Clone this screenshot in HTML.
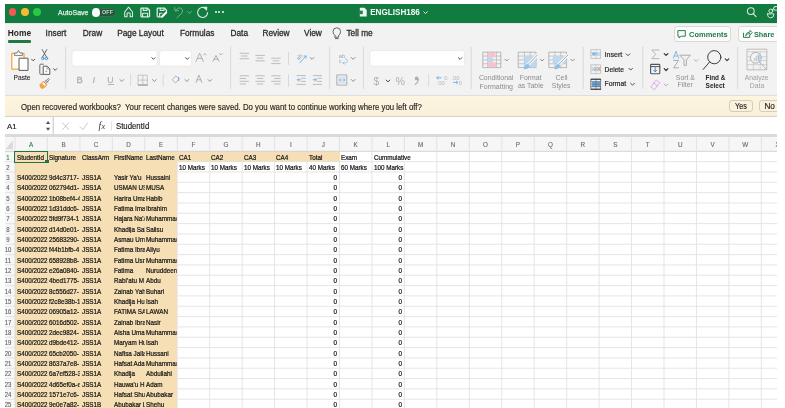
<!DOCTYPE html><html><head><meta charset="utf-8"><style>
*{box-sizing:border-box}
body{margin:0;width:785px;height:408px;background:#fff;position:relative;overflow:hidden;font-family:"Liberation Sans",sans-serif}
#app{position:absolute;left:0;top:0;width:777px;height:408px;clip-path:inset(4px 0 0 5px);background:#f2f2f2;overflow:hidden;will-change:transform}
.a{position:absolute;white-space:nowrap}
.t{position:absolute;white-space:nowrap;line-height:1}
.c{position:absolute;white-space:nowrap;line-height:1;font-size:7.6px;color:#141414;transform:scaleX(0.83);transform-origin:0 0;-webkit-text-stroke:0.24px #141414}
.cr{position:absolute;white-space:nowrap;line-height:1;font-size:7.6px;color:#141414;transform:scaleX(0.83);transform-origin:100% 0;text-align:right;-webkit-text-stroke:0.24px #141414}
</style></head><body><div id="app">

<div class="a" style="left:0;top:0;width:777px;height:23px;background:#127b40"></div>
<div class="a" style="left:8.70px;top:8.35px;width:7.8px;height:7.8px;border-radius:50%;background:#ee5b52"></div>
<div class="a" style="left:21.10px;top:8.35px;width:7.8px;height:7.8px;border-radius:50%;background:#f4bb2e"></div>
<div class="a" style="left:33.40px;top:8.35px;width:7.8px;height:7.8px;border-radius:50%;background:#2ac840"></div>
<div class="t" style="left:57.6px;top:9.2px;font-size:7.4px;color:#e3ede6;transform:scaleX(0.95);transform-origin:0 0;-webkit-text-stroke:0.25px #e3ede6">AutoSave</div>
<div class="a" style="left:92px;top:7.8px;width:23.8px;height:9.2px;border-radius:4.6px;background:#245a3a;border:0.5px solid #3c6e50"></div>
<div class="a" style="left:92.3px;top:8.1px;width:7.8px;height:8.6px;border-radius:50%;background:#fafafa"></div>
<div class="t" style="left:101.9px;top:10.4px;font-size:5.3px;font-weight:bold;color:#cfd8d2;letter-spacing:0.2px">OFF</div>
<svg class="a" style="left:0;top:0" width="777" height="23" viewBox="0 0 777 23" fill="none" stroke="#dcebe1" stroke-width="1.05" stroke-linejoin="round" stroke-linecap="round">
 <path d="M124.7 12 L128.6 7.2 L132.5 12 L132.5 16.8 L130.1 16.8 L130.1 13.2 Q128.6 12.2 127.1 13.2 L127.1 16.8 L124.7 16.8 Z"/>
 <path d="M141 8.2 h6.5 l2 2 v5.8 q0 0.8 -0.8 0.8 h-7 q-0.8 0 -0.8 -0.8 v-7 q0 -0.8 0.8 -0.8z" stroke-width="1.3"/>
 <path d="M143.2 8.2 v2.2 h3.8 v-2.2" stroke-width="1.1"/>
 <path d="M142.6 16.6 v-3.3 h4.9 v3.3" stroke-width="1.1"/>
 <path d="M158 8.2 h6.5 l2 2 v1.4 M160.6 16.8 h-2.6 q-0.8 0 -0.8 -0.8 v-7 q0 -0.8 0.8 -0.8" stroke-width="1.3"/>
 <path d="M160.2 8.2 v2.2 h3.8 v-2.2" stroke-width="1.1"/>
 <path d="M159.6 16.6 v-3.3 h2.5" stroke-width="1.1"/>
 <path d="M166.2 12.6 L162 16.8" stroke="#ffffff" stroke-width="2.1"/>
 <g stroke="#79b08c" stroke-width="0.95">
  <path d="M175.6 10.6 Q178.6 6.4 181.6 8.6 Q183.8 10.8 181.4 13.6 L176.8 17.8"/>
  <path d="M174.6 7.6 L175.2 11 L178.6 10.6"/>
  <path d="M187.8 11.5 L189.6 13.5 L191.4 11.5"/>
 </g>
 <path d="M205.8 8.6 A5 5 0 1 0 207.6 12.6" stroke-width="1.15"/>
 <path d="M203.9 7.2 L207 7 L206.6 10.2 Z" fill="#dcebe1" stroke-width="0.6"/>
 <path d="M359.8 7.8 h4.6 l2.3 2.3 v6.4 h-6.9 z" fill="#f4f8f5" stroke="none"/>
 <rect x="358.9" y="10.6" width="3.9" height="3.6" fill="#1f8a4c" stroke="none"/>
 <path d="M748.6 7.6" />
 <circle cx="750.8" cy="11.1" r="3.4" stroke-width="1.05"/>
 <path d="M753.3 13.6 L756 16.6" stroke-width="1.1"/>
 <path d="M423.7 11.7 L425.5 13.6 L427.3 11.7" stroke="#e8f1ea" stroke-width="0.95"/>
 <circle cx="770.8" cy="11" r="1.9" stroke-width="1"/>
 <path d="M767.6 13.9 h6.3 q0.2 3.9 -3.15 3.9 q-3.35 0 -3.15 -3.9 z" stroke-width="1"/>
 <rect x="773.6" y="6.6" width="5.4" height="3.6" rx="1.6" stroke-width="1"/>
 <path d="M772 9.6 L773.8 8.8" stroke-width="0.9"/>
</svg>
<div class="a" style="left:215px;top:11.4px;width:1.9px;height:1.9px;border-radius:50%;background:#f0f5f1"></div>
<div class="a" style="left:218.4px;top:11.4px;width:1.9px;height:1.9px;border-radius:50%;background:#f0f5f1"></div>
<div class="a" style="left:221.8px;top:11.4px;width:1.9px;height:1.9px;border-radius:50%;background:#f0f5f1"></div>
<div class="t" style="left:370.2px;top:9.3px;font-size:8.15px;font-weight:bold;color:#f6faf7">ENGLISH186</div>

<div class="a" style="left:0;top:23px;width:777px;height:1px;background:#e6e6e6"></div>
<div class="t" style="left:7.80px;top:29.19px;font-size:8.4px;font-weight:bold;color:#262626">Home</div>
<div class="t" style="left:45.60px;top:29.27px;font-size:8.3px;font-weight:normal;color:#2c2c2c;-webkit-text-stroke:0.28px #2c2c2c">Insert</div>
<div class="t" style="left:82.80px;top:29.27px;font-size:8.3px;font-weight:normal;color:#2c2c2c;-webkit-text-stroke:0.28px #2c2c2c">Draw</div>
<div class="t" style="left:117.20px;top:29.27px;font-size:8.3px;font-weight:normal;color:#2c2c2c;-webkit-text-stroke:0.28px #2c2c2c">Page Layout</div>
<div class="t" style="left:179.90px;top:29.27px;font-size:8.3px;font-weight:normal;color:#2c2c2c;-webkit-text-stroke:0.28px #2c2c2c">Formulas</div>
<div class="t" style="left:230.50px;top:29.27px;font-size:8.3px;font-weight:normal;color:#2c2c2c;-webkit-text-stroke:0.28px #2c2c2c">Data</div>
<div class="t" style="left:262.40px;top:29.27px;font-size:8.3px;font-weight:normal;color:#2c2c2c;-webkit-text-stroke:0.28px #2c2c2c">Review</div>
<div class="t" style="left:304.00px;top:29.27px;font-size:8.3px;font-weight:normal;color:#2c2c2c;-webkit-text-stroke:0.28px #2c2c2c">View</div>
<div class="t" style="left:346.40px;top:29.27px;font-size:8.3px;font-weight:normal;color:#2c2c2c;-webkit-text-stroke:0.28px #2c2c2c">Tell me</div>
<div class="a" style="left:7.8px;top:40.4px;width:23.4px;height:2.2px;border-radius:1.1px;background:#1e7a45"></div>
<div class="a" style="left:673.5px;top:26.4px;width:57.8px;height:16px;border:0.8px solid #d9d9d9;border-radius:3px;background:#fbfbfb"></div>
<div class="t" style="left:689.00px;top:30.85px;font-size:7.5px;font-weight:bold;color:#23774a">Comments</div>
<div class="a" style="left:738.3px;top:26.4px;width:60px;height:16px;border:0.8px solid #d9d9d9;border-radius:3px;background:#fbfbfb"></div>
<div class="t" style="left:754.00px;top:31.02px;font-size:7.3px;font-weight:bold;color:#23774a">Share</div>
<div class="t" style="left:13.60px;top:75.01px;font-size:6.6px;font-weight:normal;color:#262626;-webkit-text-stroke:0.1px #262626">Paste</div>
<div class="t" style="left:478.90px;top:74.66px;font-size:6.9px;font-weight:normal;color:#8c8c8c">Conditional</div>
<div class="t" style="left:479.50px;top:82.97px;font-size:7px;font-weight:normal;color:#8c8c8c">Formatting</div>
<div class="t" style="left:519.70px;top:74.66px;font-size:6.9px;font-weight:normal;color:#8c8c8c">Format</div>
<div class="t" style="left:518.00px;top:83.06px;font-size:6.9px;font-weight:normal;color:#8c8c8c">as Table</div>
<div class="t" style="left:555.60px;top:74.66px;font-size:6.9px;font-weight:normal;color:#8c8c8c">Cell</div>
<div class="t" style="left:551.80px;top:83.06px;font-size:6.9px;font-weight:normal;color:#8c8c8c">Styles</div>
<div class="t" style="left:604.60px;top:51.59px;font-size:7.1px;font-weight:normal;color:#2a2a2a;-webkit-text-stroke:0.2px #2a2a2a">Insert</div>
<div class="t" style="left:604.60px;top:66.53px;font-size:6.7px;font-weight:normal;color:#2a2a2a;-webkit-text-stroke:0.2px #2a2a2a">Delete</div>
<div class="t" style="left:604.60px;top:81.34px;font-size:6.8px;font-weight:normal;color:#2a2a2a;-webkit-text-stroke:0.2px #2a2a2a">Format</div>
<div class="t" style="left:675.80px;top:74.56px;font-size:6.9px;font-weight:normal;color:#8c8c8c">Sort &amp;</div>
<div class="t" style="left:677.50px;top:82.06px;font-size:6.9px;font-weight:normal;color:#8c8c8c">Filter</div>
<div class="t" style="left:705.60px;top:75.12px;font-size:6.35px;font-weight:bold;color:#262626">Find &amp;</div>
<div class="t" style="left:705.60px;top:82.90px;font-size:6.5px;font-weight:bold;color:#262626">Select</div>
<div class="t" style="left:744.80px;top:74.83px;font-size:6.7px;font-weight:normal;color:#a0a0a0">Analyze</div>
<div class="t" style="left:749.70px;top:82.56px;font-size:6.9px;font-weight:normal;color:#a0a0a0">Data</div>
<svg class="a" style="left:0;top:0" width="777" height="96" viewBox="0 0 777 96" fill="none" stroke-linecap="round" stroke-linejoin="round"><path d="M678.3 30.6 h7 v5.6 h-4.2 l-2 1.8 v-1.8 h-0.8 z" stroke="#23774a" stroke-width="0.95"/><path d="M743.5 33.2 v4.2 h6.2 v-2" stroke="#23774a" stroke-width="0.95"/><path d="M745.6 35.6 q0.6 -3.6 4.4 -3.6 v-1.6 l2.3 2.3 l-2.3 2.1 v-1.3 q-2.8 0 -4.4 2.1z" stroke="#23774a" stroke-width="0.85"/><path d="M335 35.6 q-2 -1.6 -2 -4 a3.8 3.8 0 0 1 7.6 0 q0 2.4 -2 4 v1.6 h-3.6 z M335.4 38.6 h2.8" stroke="#555" stroke-width="0.9"/><line x1="65.6" y1="47" x2="65.6" y2="88.5" stroke="#d6d6d6" stroke-width="0.9"/><line x1="230.6" y1="47" x2="230.6" y2="88.5" stroke="#d6d6d6" stroke-width="0.9"/><line x1="363.4" y1="47" x2="363.4" y2="88.5" stroke="#d6d6d6" stroke-width="0.9"/><line x1="471.2" y1="47" x2="471.2" y2="88.5" stroke="#d6d6d6" stroke-width="0.9"/><line x1="583.2" y1="47" x2="583.2" y2="88.5" stroke="#d6d6d6" stroke-width="0.9"/><line x1="642.8" y1="47" x2="642.8" y2="88.5" stroke="#d6d6d6" stroke-width="0.9"/><line x1="737.6" y1="47" x2="737.6" y2="88.5" stroke="#d6d6d6" stroke-width="0.9"/><line x1="329.6" y1="47" x2="329.6" y2="88.5" stroke="#d6d6d6" stroke-width="0.9"/><line x1="130.6" y1="73.8" x2="130.6" y2="85.8" stroke="#d6d6d6" stroke-width="0.9"/><line x1="163.2" y1="74.2" x2="163.2" y2="86" stroke="#d6d6d6" stroke-width="0.9"/><line x1="288.5" y1="52.3" x2="288.5" y2="64.6" stroke="#d6d6d6" stroke-width="0.9"/><line x1="288.5" y1="74.4" x2="288.5" y2="86.6" stroke="#d6d6d6" stroke-width="0.9"/><line x1="428.7" y1="74.3" x2="428.7" y2="86.2" stroke="#d6d6d6" stroke-width="0.9"/><path d="M11.8 53.4 h12.2 v15.6 h-12.2 z" fill="#fdfdfd" stroke="#f2a541" stroke-width="1.25"/><path d="M14.6 55.2 v-2.2 h2.4 l1.5 -2.6 l1.5 2.6 h2.4 v2.2 z" fill="#f6f6f6" stroke="#777" stroke-width="0.9"/><rect x="19.4" y="58.2" width="8.6" height="12.2" fill="#fdfdfd" stroke="#555" stroke-width="0.95"/><rect x="72" y="50.6" width="85.2" height="15.5" rx="2.2" fill="#fff" stroke="#e2e2e2" stroke-width="0.6"/><rect x="159.6" y="50.6" width="31.9" height="15.5" rx="2.2" fill="#fff" stroke="#e2e2e2" stroke-width="0.6"/><rect x="370" y="50.6" width="94.4" height="15.5" rx="2.2" fill="#fff" stroke="#e2e2e2" stroke-width="0.6"/><path d="M31.6 59.20 L33.20 60.80 L34.8 59.20" stroke="#444" stroke-width="0.95"/><path d="M53.6 68.70 L55.20 70.30 L56.8 68.70" stroke="#444" stroke-width="0.95"/><path d="M151.8 57.70 L153.40 59.30 L155 57.70" stroke="#444" stroke-width="0.95"/><path d="M185.5 57.65 L187.20 59.35 L188.9 57.65" stroke="#444" stroke-width="0.95"/><path d="M119.9 79.55 L121.80 81.45 L123.7 79.55" stroke="#8a8a8a" stroke-width="0.95"/><path d="M152.4 79.53 L154.35 81.47 L156.3 79.53" stroke="#8a8a8a" stroke-width="0.95"/><path d="M184.9 79.53 L186.85 81.47 L188.8 79.53" stroke="#8a8a8a" stroke-width="0.95"/><path d="M208.1 79.62 L209.85 81.38 L211.6 79.62" stroke="#8a8a8a" stroke-width="0.95"/><path d="M310.2 57.48 L312.05 59.32 L313.9 57.48" stroke="#8a8a8a" stroke-width="0.95"/><path d="M351.2 57.42 L353.15 59.38 L355.1 57.42" stroke="#8a8a8a" stroke-width="0.95"/><path d="M351.2 79.42 L353.15 81.38 L355.1 79.42" stroke="#8a8a8a" stroke-width="0.95"/><path d="M386.2 80.10 L388.00 81.90 L389.8 80.10" stroke="#333" stroke-width="0.95"/><path d="M458.4 57.75 L460.10 59.45 L461.8 57.75" stroke="#444" stroke-width="0.95"/><path d="M504.9 59.20 L506.70 61.00 L508.5 59.20" stroke="#8a8a8a" stroke-width="0.95"/><path d="M540.3 59.20 L542.10 61.00 L543.9 59.20" stroke="#8a8a8a" stroke-width="0.95"/><path d="M570.8 59.20 L572.60 61.00 L574.4 59.20" stroke="#8a8a8a" stroke-width="0.95"/><path d="M626.2 53.90 L628.00 55.70 L629.8 53.90" stroke="#444" stroke-width="0.95"/><path d="M628.9 68.33 L630.65 70.08 L632.4 68.33" stroke="#444" stroke-width="0.95"/><path d="M630.6 83.25 L632.50 85.15 L634.4 83.25" stroke="#444" stroke-width="0.95"/><path d="M664.2 53.58 L666.05 55.42 L667.9 53.58" stroke="#333" stroke-width="1.2"/><path d="M664.2 68.68 L666.05 70.52 L667.9 68.68" stroke="#333" stroke-width="1.2"/><path d="M664.2 84.12 L665.95 85.88 L667.7 84.12" stroke="#aaa" stroke-width="0.95"/><path d="M694.5 59.62 L696.25 61.38 L698 59.62" stroke="#aaa" stroke-width="0.95"/><path d="M725.3 58.92 L727.05 60.67 L728.8 58.92" stroke="#333" stroke-width="1.1"/><path d="M42.2 49.6 L46.6 57.2 M46.8 49.6 L42.4 57.2" stroke="#555" stroke-width="0.9"/><circle cx="42.8" cy="58.4" r="1.3" stroke="#3d8fd9" stroke-width="0.9"/><circle cx="46.4" cy="58.4" r="1.3" stroke="#3d8fd9" stroke-width="0.9"/><path d="M43.4 64.2 h-2.8 q-0.8 0 -0.8 0.8 v8.6 q0 0.8 0.8 0.8 h2" stroke="#666" stroke-width="0.95"/><path d="M43.6 66.2 h3.6 l2.6 2.6 v5.6 h-6.2 z" fill="#fcfcfc" stroke="#555" stroke-width="0.95"/><path d="M47 66.4 v2.6 h2.6" stroke="#777" stroke-width="0.7"/><rect x="45.4" y="70.6" width="1.8" height="1.6" fill="#aaa"/><path d="M40.2 84.4 L43.4 81.2 L47 84.8 L43.8 88 Q42.2 89.2 40.8 87.8 Q39.4 86.2 40.2 84.4 z" fill="#f7a446" stroke="#f0952e" stroke-width="0.6"/><path d="M42.2 83.4 L43.4 82.2 L45.8 84.6 L44.6 85.8 z" fill="#fff"/><path d="M44.4 82.2 L48.6 78.4 M45.8 83.6 L49.4 79.4 M46.2 80.6 l1.6 1.6" stroke="#707070" stroke-width="0.85"/><path d="M196 61.5 L199.6 53.2 L203.3 61.5 M197.4 58.4 h4.6" stroke="#aaa" stroke-width="0.9"/><path d="M203.6 55 l1.3 -1.4 l1.3 1.4" stroke="#6aaee8" stroke-width="0.8"/><path d="M213 61.5 L216 55.4 L219 61.5 M214.2 59.2 h3.6" stroke="#aaa" stroke-width="0.9"/><path d="M219.6 53.6 l1.3 1.4 l1.3 -1.4" stroke="#6aaee8" stroke-width="0.8"/><rect x="138.4" y="75.2" width="8.9" height="9.8" stroke="#bbb" stroke-width="0.8"/><path d="M142.85 75.2 v9.8 M138.4 80.1 h8.9" stroke="#bbb" stroke-width="0.8"/><path d="M138.4 85 h8.9" stroke="#aaa" stroke-width="1.3"/><path d="M172.4 79.4 l3.6 -3.6 l3.4 3.4 l-3.6 3.4 z" stroke="#aaa" stroke-width="0.9"/><path d="M178.6 77.4 v3.2" stroke="#6aaee8" stroke-width="1"/><path d="M196 82.4 L198.9 75 L201.8 82.4 M197.1 79.8 h3.6" stroke="#aaa" stroke-width="0.9"/><line x1="240" y1="53.3" x2="248.6" y2="53.3" stroke="#b9b9b9" stroke-width="0.95"/><line x1="241.4" y1="56" x2="247.2" y2="56" stroke="#b9b9b9" stroke-width="0.95"/><line x1="240" y1="58.7" x2="248.6" y2="58.7" stroke="#b9b9b9" stroke-width="0.95"/><line x1="255.8" y1="55.4" x2="264.5" y2="55.4" stroke="#b9b9b9" stroke-width="0.95"/><line x1="257.2" y1="58.1" x2="263.1" y2="58.1" stroke="#b9b9b9" stroke-width="0.95"/><line x1="255.8" y1="60.8" x2="264.5" y2="60.8" stroke="#b9b9b9" stroke-width="0.95"/><line x1="271.6" y1="58.2" x2="280.2" y2="58.2" stroke="#b9b9b9" stroke-width="0.95"/><line x1="273" y1="60.9" x2="278.8" y2="60.9" stroke="#b9b9b9" stroke-width="0.95"/><line x1="271.6" y1="63.6" x2="280.2" y2="63.6" stroke="#b9b9b9" stroke-width="0.95"/><line x1="240" y1="75.8" x2="248.6" y2="75.8" stroke="#b9b9b9" stroke-width="0.95"/><line x1="255.8" y1="75.8" x2="264.5" y2="75.8" stroke="#b9b9b9" stroke-width="0.95"/><line x1="271.6" y1="75.8" x2="280.2" y2="75.8" stroke="#b9b9b9" stroke-width="0.95"/><line x1="240" y1="78.5" x2="245.6" y2="78.5" stroke="#b9b9b9" stroke-width="0.95"/><line x1="257.3" y1="78.5" x2="263" y2="78.5" stroke="#b9b9b9" stroke-width="0.95"/><line x1="274.6" y1="78.5" x2="280.2" y2="78.5" stroke="#b9b9b9" stroke-width="0.95"/><line x1="240" y1="81.3" x2="248.6" y2="81.3" stroke="#b9b9b9" stroke-width="0.95"/><line x1="255.8" y1="81.3" x2="264.5" y2="81.3" stroke="#b9b9b9" stroke-width="0.95"/><line x1="271.6" y1="81.3" x2="280.2" y2="81.3" stroke="#b9b9b9" stroke-width="0.95"/><line x1="240" y1="84" x2="245.6" y2="84" stroke="#b9b9b9" stroke-width="0.95"/><line x1="257.3" y1="84" x2="263" y2="84" stroke="#b9b9b9" stroke-width="0.95"/><line x1="274.6" y1="84" x2="280.2" y2="84" stroke="#b9b9b9" stroke-width="0.95"/><line x1="297" y1="75.6" x2="305.4" y2="75.6" stroke="#b9b9b9" stroke-width="0.95"/><line x1="301.4" y1="78.2" x2="305.4" y2="78.2" stroke="#b9b9b9" stroke-width="0.95"/><line x1="301.4" y1="81.4" x2="305.4" y2="81.4" stroke="#b9b9b9" stroke-width="0.95"/><line x1="297" y1="84.4" x2="305.4" y2="84.4" stroke="#b9b9b9" stroke-width="0.95"/><path d="M300.6 79.8 h-3.2 M298.8 78.4 l-1.4 1.4 l1.4 1.4" stroke="#6aaee8" stroke-width="0.9"/><line x1="313.2" y1="75.6" x2="321.59999999999997" y2="75.6" stroke="#b9b9b9" stroke-width="0.95"/><line x1="317.59999999999997" y1="78.2" x2="321.59999999999997" y2="78.2" stroke="#b9b9b9" stroke-width="0.95"/><line x1="317.59999999999997" y1="81.4" x2="321.59999999999997" y2="81.4" stroke="#b9b9b9" stroke-width="0.95"/><line x1="313.2" y1="84.4" x2="321.59999999999997" y2="84.4" stroke="#b9b9b9" stroke-width="0.95"/><path d="M313.2 79.8 h3.2 M315.0 78.4 l1.4 1.4 l-1.4 1.4" stroke="#6aaee8" stroke-width="0.9"/><text x="0" y="0" transform="translate(298.6,60.6) rotate(-50)" font-family="Liberation Sans" font-size="5.6" fill="#999">ab</text><path d="M299.8 62.8 L306 55.9 M303.8 56 h2.2 v2.2" stroke="#6aaee8" stroke-width="0.9"/><text x="338.8" y="57.8" font-family="Liberation Sans" font-size="5.6" fill="#a6a6a6">ab</text><text x="338.8" y="63.4" font-family="Liberation Sans" font-size="5.6" fill="#a6a6a6">c</text><path d="M345.2 58.6 q2.2 0 2.2 2.2 q0 2.2 -2.2 2.2 h-2.2 M344.2 61.8 l-1.2 1.2 l1.2 1.2" stroke="#8cc0ec" stroke-width="0.8"/><rect x="337.2" y="74.9" width="9.6" height="10.2" stroke="#a0a0a0" stroke-width="0.8"/><path d="M337.2 77.2 h9.6 M337.2 82.8 h9.6" stroke="#b8b8b8" stroke-width="0.6"/><rect x="338" y="77.6" width="8" height="4.8" fill="#e0edf8" stroke="none"/><path d="M339 80 h6 M340.2 78.9 l-1.2 1.1 l1.2 1.1 M343.8 78.9 l1.2 1.1 l-1.2 1.1" stroke="#7ab6ea" stroke-width="0.75"/><text x="373.6" y="84.6" font-family="Liberation Sans" font-size="10.4" fill="#b0b0b0">$</text><text x="395.4" y="84.6" font-family="Liberation Sans" font-size="10.6" fill="#b0b0b0">%</text><circle cx="416.6" cy="78.4" r="1.9" fill="#b0b0b0"/><path d="M418.3 78.8 q0.2 3.4 -3 5.6" stroke="#b0b0b0" stroke-width="1.2"/><text x="444.2" y="79.6" font-family="Liberation Sans" font-size="5.8" fill="#b5b5b5">0</text><text x="436.6" y="85.4" font-family="Liberation Sans" font-size="5.8" fill="#b5b5b5">.00</text><path d="M441.2 77.8 h-4.4 M438.2 76.4 l-1.4 1.4 l1.4 1.4" stroke="#6aaee8" stroke-width="0.9"/><text x="451.4" y="79.6" font-family="Liberation Sans" font-size="5.8" fill="#b5b5b5">.00</text><text x="458.8" y="85.4" font-family="Liberation Sans" font-size="5.8" fill="#b5b5b5">0</text><path d="M453.4 82.4 h4.4 M456.4 81 l1.4 1.4 l-1.4 1.4" stroke="#6aaee8" stroke-width="0.9"/><rect x="483.2" y="52.2" width="17.600000000000023" height="15.399999999999991" stroke="#a8a8a8" stroke-width="0.8"/><line x1="487.60" y1="52.2" x2="487.60" y2="67.6" stroke="#a8a8a8" stroke-width="0.6"/><line x1="492.00" y1="52.2" x2="492.00" y2="67.6" stroke="#a8a8a8" stroke-width="0.6"/><line x1="496.40" y1="52.2" x2="496.40" y2="67.6" stroke="#a8a8a8" stroke-width="0.6"/><line x1="483.2" y1="56.05" x2="500.8" y2="56.05" stroke="#a8a8a8" stroke-width="0.6"/><line x1="483.2" y1="59.90" x2="500.8" y2="59.90" stroke="#a8a8a8" stroke-width="0.6"/><line x1="483.2" y1="63.75" x2="500.8" y2="63.75" stroke="#a8a8a8" stroke-width="0.6"/><rect x="487.6" y="52.6" width="7.6" height="4.6" fill="#f7c3cc"/><rect x="487.6" y="57.2" width="4.4" height="5" fill="#bcd9f3"/><rect x="487.6" y="62.2" width="8.6" height="5" fill="#f7c3cc"/><rect x="518.6" y="52.2" width="17.399999999999977" height="15.399999999999991" stroke="#a8a8a8" stroke-width="0.8"/><line x1="524.40" y1="52.2" x2="524.40" y2="67.6" stroke="#a8a8a8" stroke-width="0.6"/><line x1="530.20" y1="52.2" x2="530.20" y2="67.6" stroke="#a8a8a8" stroke-width="0.6"/><line x1="518.6" y1="56.05" x2="536" y2="56.05" stroke="#a8a8a8" stroke-width="0.6"/><line x1="518.6" y1="59.90" x2="536" y2="59.90" stroke="#a8a8a8" stroke-width="0.6"/><line x1="518.6" y1="63.75" x2="536" y2="63.75" stroke="#a8a8a8" stroke-width="0.6"/><rect x="524.4" y="56.4" width="11.2" height="10.8" fill="#bcd9f3"/><path d="M537.4 55 L527.6 65" stroke="#fff" stroke-width="2.8"/><path d="M537.4 55 L527.6 65" stroke="#8a8a8a" stroke-width="0.8"/><path d="M528 63.8 q-3 0.2 -4.2 5.4 q4.2 0.4 6 -3.2 z" fill="#8fbfec"/><rect x="549.2" y="52.2" width="17.399999999999977" height="15.399999999999991" stroke="#a8a8a8" stroke-width="0.8"/><line x1="555.00" y1="52.2" x2="555.00" y2="67.6" stroke="#a8a8a8" stroke-width="0.6"/><line x1="560.80" y1="52.2" x2="560.80" y2="67.6" stroke="#a8a8a8" stroke-width="0.6"/><line x1="549.2" y1="56.05" x2="566.6" y2="56.05" stroke="#a8a8a8" stroke-width="0.6"/><line x1="549.2" y1="59.90" x2="566.6" y2="59.90" stroke="#a8a8a8" stroke-width="0.6"/><line x1="549.2" y1="63.75" x2="566.6" y2="63.75" stroke="#a8a8a8" stroke-width="0.6"/><rect x="552.6" y="56.2" width="13.6" height="7" fill="#bcd9f3"/><path d="M568 55 L558.2 65" stroke="#fff" stroke-width="2.8"/><path d="M568 55 L558.2 65" stroke="#8a8a8a" stroke-width="0.8"/><path d="M558.6 63.8 q-3 0.2 -4.2 5.4 q4.2 0.4 6 -3.2 z" fill="#8fbfec"/><rect x="591.2" y="49.6" width="9.399999999999977" height="8.799999999999997" stroke="#bbb" stroke-width="0.8"/><line x1="595.90" y1="49.6" x2="595.90" y2="58.4" stroke="#bbb" stroke-width="0.6"/><line x1="591.2" y1="52.53" x2="600.6" y2="52.53" stroke="#bbb" stroke-width="0.6"/><line x1="591.2" y1="55.47" x2="600.6" y2="55.47" stroke="#bbb" stroke-width="0.6"/><rect x="592" y="52.4" width="7.8" height="3" fill="#c5def5"/><path d="M597 53.9 h-4 M594 52.6 l-1.3 1.3 l1.3 1.3" stroke="#4a9be0" stroke-width="0.8"/><rect x="591.2" y="64.8" width="9.399999999999977" height="8.799999999999997" stroke="#bbb" stroke-width="0.8"/><line x1="595.90" y1="64.8" x2="595.90" y2="73.6" stroke="#bbb" stroke-width="0.6"/><line x1="591.2" y1="67.73" x2="600.6" y2="67.73" stroke="#bbb" stroke-width="0.6"/><line x1="591.2" y1="70.67" x2="600.6" y2="70.67" stroke="#bbb" stroke-width="0.6"/><path d="M592.6 69.2 h3.4 M594.8 67.9 l1.3 1.3 l-1.3 1.3" stroke="#6aaee8" stroke-width="0.8"/><path d="M597.4 67.6 l2.6 2.8 M600 67.6 l-2.6 2.8" stroke="#e06a6a" stroke-width="0.8"/><rect x="592" y="81.4" width="8" height="5.6" fill="#62a8e6"/><rect x="591.2" y="79.2" width="9.399999999999977" height="10.0" stroke="#666" stroke-width="0.8"/><line x1="595.90" y1="79.2" x2="595.90" y2="89.2" stroke="#666" stroke-width="0.6"/><line x1="591.2" y1="81.70" x2="600.6" y2="81.70" stroke="#666" stroke-width="0.6"/><line x1="591.2" y1="84.20" x2="600.6" y2="84.20" stroke="#666" stroke-width="0.6"/><line x1="591.2" y1="86.70" x2="600.6" y2="86.70" stroke="#666" stroke-width="0.6"/><path d="M591.2 79.2 h9.4 M591.2 89.2 h9.4" stroke="#333" stroke-width="1.1"/><path d="M659 50 h-7.2 l3.8 4.4 l-3.8 4.2 h7.2" stroke="#b0b0b0" stroke-width="0.9"/><rect x="650.6" y="64.4" width="9.2" height="9.4" rx="0.8" stroke="#555" stroke-width="1.1"/><path d="M650.6 66.6 h9.2" stroke="#555" stroke-width="1"/><path d="M655.2 67.6 v4 M653.6 70.2 l1.6 1.6 l1.6 -1.6" stroke="#3d8fd9" stroke-width="1"/><path d="M651 86.6 l5.2 -6.6 l3.6 2.8 l-5.2 6.6 z M653.8 83 l3.6 2.8" stroke="#d7a6e0" stroke-width="0.9"/><path d="M673.4 58.2 L676 51.2 L678.6 58.2 M674.3 56 h3.4" stroke="#7ab8ea" stroke-width="0.95"/><path d="M673.6 60.4 h5 l-5 7.4 h5" stroke="#a8a8a8" stroke-width="0.95"/><path d="M680 55.2 h10.4 l-4 4.6 v5.6 h-2.4 v-5.6 z" stroke="#a8a8a8" stroke-width="0.95"/><circle cx="714.3" cy="57.2" r="6.6" stroke="#3a3a3a" stroke-width="1"/><path d="M709.6 62 L703.2 69.4" stroke="#3a3a3a" stroke-width="1"/><rect x="747.4" y="49.2" width="19.4" height="20.6" stroke="#b8b8b8" stroke-width="0.9"/><path d="M747.4 51.8 h19.4 M747.4 56.8 h19.4 M747.4 60.6 h19.4 M747.4 64.6 h19.4 M753.4 51.8 v18 M760.2 51.8 v18" stroke="#c4c4c4" stroke-width="0.7"/><circle cx="755.8" cy="57.8" r="5.4" fill="#f4f4f4" stroke="#b0b0b0" stroke-width="0.95"/><path d="M759.6 61.8 L766.4 69.4" stroke="#b0b0b0" stroke-width="0.95"/><rect x="757.7" y="54.9" width="1.9" height="6.4" fill="#9cc6ee"/><rect x="753.8" y="58" width="1.5" height="3.3" fill="#cfcfcf"/><rect x="755.6" y="55.8" width="1.5" height="5.5" fill="#cfcfcf"/></svg>
<div class="t" style="left:76.50px;top:75.34px;font-size:9.4px;font-weight:normal;color:#b0b0b0;-webkit-text-stroke:0.35px #b0b0b0">B</div>
<div class="t" style="left:92.40px;top:75.34px;font-size:9.4px;font-weight:normal;color:#b0b0b0;-webkit-text-stroke:0.2px #b0b0b0"><i>I</i></div>
<div class="t" style="left:107.30px;top:75.85px;font-size:8.8px;font-weight:normal;color:#b0b0b0;-webkit-text-stroke:0.2px #b0b0b0">U</div>
<div class="a" style="left:107.5px;top:84.2px;width:6px;height:0.8px;background:#b3b3b3"></div>
<div class="a" style="left:0;top:94.8px;width:777px;height:1px;background:#dedede"></div>
<div class="a" style="left:0;top:95.6px;width:777px;height:21px;background:linear-gradient(#fdf5e0,#faf0da)"></div>
<div class="t" style="left:20.8px;top:102.6px;font-size:8.4px;color:#262626;transform:scaleX(0.933);transform-origin:0 0;-webkit-text-stroke:0.15px #262626">Open recovered workbooks?&nbsp; Your recent changes were saved. Do you want to continue working where you left off?</div>
<div class="a" style="left:729.3px;top:100px;width:24.2px;height:11.8px;border:1px solid #d6cdb8;border-radius:3px;background:#fbf2de"></div>
<div class="t" style="left:735px;top:103.2px;font-size:8.2px;color:#222;transform:scaleX(0.88);transform-origin:0 0;-webkit-text-stroke:0.15px #222">Yes</div>
<div class="a" style="left:758.5px;top:100px;width:30px;height:11.8px;border:1px solid #d6cdb8;border-radius:3px;background:#fbf2de"></div>
<div class="t" style="left:764.4px;top:103.2px;font-size:8.2px;color:#222;-webkit-text-stroke:0.15px #222">No</div>
<div class="a" style="left:0;top:116.1px;width:777px;height:1.3px;background:#d9d2c2"></div>
<div class="a" style="left:0;top:117.4px;width:777px;height:17px;background:#fff"></div>
<div class="t" style="left:7.10px;top:122.50px;font-size:7.8px;font-weight:normal;color:#222;-webkit-text-stroke:0.15px #222">A1</div>
<div class="t" style="left:116.20px;top:122.29px;font-size:8.4px;font-weight:normal;color:#111;transform:scaleX(0.93);transform-origin:0 0;-webkit-text-stroke:0.12px #111">StudentId</div>
<svg class="a" style="left:0;top:0" width="777" height="136" viewBox="0 0 777 136" fill="none" stroke-linecap="round" stroke-linejoin="round">
<path d="M45.9 124 L48.05 121.1 L50.2 124 Z" fill="#555"/>
<path d="M45.9 127.7 L48.05 130.8 L50.2 127.7 Z" fill="#555"/>
<line x1="53.2" y1="117.4" x2="53.2" y2="134.3" stroke="#c8c8c8" stroke-width="1.1"/>
<path d="M62.6 122.8 L68.8 129.6 M68.8 122.8 L62.6 129.6" stroke="#c4c4c4" stroke-width="0.9"/>
<path d="M80 126.6 L82.8 129.6 L87.8 122.8" stroke="#c4c4c4" stroke-width="0.9"/>
<line x1="111.4" y1="121.6" x2="111.4" y2="130.3" stroke="#dcdcdc" stroke-width="0.9"/>
<text x="98.4" y="129.4" font-family="Liberation Serif" font-style="italic" font-size="9.6" fill="#3a3a3a">f</text>
<text x="101.6" y="129.4" font-family="Liberation Serif" font-style="italic" font-size="8.4" fill="#3a3a3a">x</text>
</svg>
<div class="a" style="left:0;top:134.3px;width:777px;height:2.6px;background:#dadada"></div>
<div class="a" style="left:0;top:136.9px;width:777px;height:14.4px;background:#f6f6f6"></div>
<div class="a" style="left:0;top:151.3px;width:777px;height:256.7px;background:#fff"></div>
<div class="a" style="left:0;top:151.3px;width:15.0px;height:256.7px;background:#f7f7f7"></div>
<div class="a" style="left:15.0px;top:151.3px;width:162.25px;height:256.7px;background:#f6dfb5"></div>
<div class="a" style="left:177.25px;top:151.3px;width:162.25px;height:10.33px;background:#f6dfb5"></div>
<svg class="a" style="left:0;top:0" width="777" height="408" viewBox="0 0 777 408"><line x1="0" y1="151.30" x2="777" y2="151.30" stroke="#d4d4d4" stroke-width="1"/><line x1="0" y1="161.63" x2="15.0" y2="161.63" stroke="#e2e2e2" stroke-width="0.9"/><line x1="339.50" y1="161.63" x2="777" y2="161.63" stroke="#e2e2e2" stroke-width="0.9"/><line x1="0" y1="171.96" x2="15.0" y2="171.96" stroke="#e2e2e2" stroke-width="0.9"/><line x1="177.25" y1="171.96" x2="777" y2="171.96" stroke="#e2e2e2" stroke-width="0.9"/><line x1="0" y1="182.29" x2="15.0" y2="182.29" stroke="#e2e2e2" stroke-width="0.9"/><line x1="177.25" y1="182.29" x2="777" y2="182.29" stroke="#e2e2e2" stroke-width="0.9"/><line x1="0" y1="192.62" x2="15.0" y2="192.62" stroke="#e2e2e2" stroke-width="0.9"/><line x1="177.25" y1="192.62" x2="777" y2="192.62" stroke="#e2e2e2" stroke-width="0.9"/><line x1="0" y1="202.95" x2="15.0" y2="202.95" stroke="#e2e2e2" stroke-width="0.9"/><line x1="177.25" y1="202.95" x2="777" y2="202.95" stroke="#e2e2e2" stroke-width="0.9"/><line x1="0" y1="213.28" x2="15.0" y2="213.28" stroke="#e2e2e2" stroke-width="0.9"/><line x1="177.25" y1="213.28" x2="777" y2="213.28" stroke="#e2e2e2" stroke-width="0.9"/><line x1="0" y1="223.61" x2="15.0" y2="223.61" stroke="#e2e2e2" stroke-width="0.9"/><line x1="177.25" y1="223.61" x2="777" y2="223.61" stroke="#e2e2e2" stroke-width="0.9"/><line x1="0" y1="233.94" x2="15.0" y2="233.94" stroke="#e2e2e2" stroke-width="0.9"/><line x1="177.25" y1="233.94" x2="777" y2="233.94" stroke="#e2e2e2" stroke-width="0.9"/><line x1="0" y1="244.27" x2="15.0" y2="244.27" stroke="#e2e2e2" stroke-width="0.9"/><line x1="177.25" y1="244.27" x2="777" y2="244.27" stroke="#e2e2e2" stroke-width="0.9"/><line x1="0" y1="254.60" x2="15.0" y2="254.60" stroke="#e2e2e2" stroke-width="0.9"/><line x1="177.25" y1="254.60" x2="777" y2="254.60" stroke="#e2e2e2" stroke-width="0.9"/><line x1="0" y1="264.93" x2="15.0" y2="264.93" stroke="#e2e2e2" stroke-width="0.9"/><line x1="177.25" y1="264.93" x2="777" y2="264.93" stroke="#e2e2e2" stroke-width="0.9"/><line x1="0" y1="275.26" x2="15.0" y2="275.26" stroke="#e2e2e2" stroke-width="0.9"/><line x1="177.25" y1="275.26" x2="777" y2="275.26" stroke="#e2e2e2" stroke-width="0.9"/><line x1="0" y1="285.59" x2="15.0" y2="285.59" stroke="#e2e2e2" stroke-width="0.9"/><line x1="177.25" y1="285.59" x2="777" y2="285.59" stroke="#e2e2e2" stroke-width="0.9"/><line x1="0" y1="295.92" x2="15.0" y2="295.92" stroke="#e2e2e2" stroke-width="0.9"/><line x1="177.25" y1="295.92" x2="777" y2="295.92" stroke="#e2e2e2" stroke-width="0.9"/><line x1="0" y1="306.25" x2="15.0" y2="306.25" stroke="#e2e2e2" stroke-width="0.9"/><line x1="177.25" y1="306.25" x2="777" y2="306.25" stroke="#e2e2e2" stroke-width="0.9"/><line x1="0" y1="316.58" x2="15.0" y2="316.58" stroke="#e2e2e2" stroke-width="0.9"/><line x1="177.25" y1="316.58" x2="777" y2="316.58" stroke="#e2e2e2" stroke-width="0.9"/><line x1="0" y1="326.91" x2="15.0" y2="326.91" stroke="#e2e2e2" stroke-width="0.9"/><line x1="177.25" y1="326.91" x2="777" y2="326.91" stroke="#e2e2e2" stroke-width="0.9"/><line x1="0" y1="337.24" x2="15.0" y2="337.24" stroke="#e2e2e2" stroke-width="0.9"/><line x1="177.25" y1="337.24" x2="777" y2="337.24" stroke="#e2e2e2" stroke-width="0.9"/><line x1="0" y1="347.57" x2="15.0" y2="347.57" stroke="#e2e2e2" stroke-width="0.9"/><line x1="177.25" y1="347.57" x2="777" y2="347.57" stroke="#e2e2e2" stroke-width="0.9"/><line x1="0" y1="357.90" x2="15.0" y2="357.90" stroke="#e2e2e2" stroke-width="0.9"/><line x1="177.25" y1="357.90" x2="777" y2="357.90" stroke="#e2e2e2" stroke-width="0.9"/><line x1="0" y1="368.23" x2="15.0" y2="368.23" stroke="#e2e2e2" stroke-width="0.9"/><line x1="177.25" y1="368.23" x2="777" y2="368.23" stroke="#e2e2e2" stroke-width="0.9"/><line x1="0" y1="378.56" x2="15.0" y2="378.56" stroke="#e2e2e2" stroke-width="0.9"/><line x1="177.25" y1="378.56" x2="777" y2="378.56" stroke="#e2e2e2" stroke-width="0.9"/><line x1="0" y1="388.89" x2="15.0" y2="388.89" stroke="#e2e2e2" stroke-width="0.9"/><line x1="177.25" y1="388.89" x2="777" y2="388.89" stroke="#e2e2e2" stroke-width="0.9"/><line x1="0" y1="399.22" x2="15.0" y2="399.22" stroke="#e2e2e2" stroke-width="0.9"/><line x1="177.25" y1="399.22" x2="777" y2="399.22" stroke="#e2e2e2" stroke-width="0.9"/><line x1="0" y1="409.55" x2="15.0" y2="409.55" stroke="#e2e2e2" stroke-width="0.9"/><line x1="177.25" y1="409.55" x2="777" y2="409.55" stroke="#e2e2e2" stroke-width="0.9"/><line x1="177.25" y1="161.63" x2="339.50" y2="161.63" stroke="#e2e2e2" stroke-width="0.9"/><line x1="15.00" y1="137" x2="15.00" y2="151.3" stroke="#e0e0e0" stroke-width="0.9"/><line x1="15.00" y1="151.3" x2="15.00" y2="408" stroke="#d8d8d8" stroke-width="0.9"/><line x1="47.45" y1="137" x2="47.45" y2="151.3" stroke="#e0e0e0" stroke-width="0.9"/><line x1="79.90" y1="137" x2="79.90" y2="151.3" stroke="#e0e0e0" stroke-width="0.9"/><line x1="112.35" y1="137" x2="112.35" y2="151.3" stroke="#e0e0e0" stroke-width="0.9"/><line x1="144.80" y1="137" x2="144.80" y2="151.3" stroke="#e0e0e0" stroke-width="0.9"/><line x1="177.25" y1="137" x2="177.25" y2="151.3" stroke="#e0e0e0" stroke-width="0.9"/><line x1="177.25" y1="161.63000000000002" x2="177.25" y2="408" stroke="#e2e2e2" stroke-width="0.9"/><line x1="209.70" y1="137" x2="209.70" y2="151.3" stroke="#e0e0e0" stroke-width="0.9"/><line x1="209.70" y1="161.63000000000002" x2="209.70" y2="408" stroke="#e2e2e2" stroke-width="0.9"/><line x1="242.15" y1="137" x2="242.15" y2="151.3" stroke="#e0e0e0" stroke-width="0.9"/><line x1="242.15" y1="161.63000000000002" x2="242.15" y2="408" stroke="#e2e2e2" stroke-width="0.9"/><line x1="274.60" y1="137" x2="274.60" y2="151.3" stroke="#e0e0e0" stroke-width="0.9"/><line x1="274.60" y1="161.63000000000002" x2="274.60" y2="408" stroke="#e2e2e2" stroke-width="0.9"/><line x1="307.05" y1="137" x2="307.05" y2="151.3" stroke="#e0e0e0" stroke-width="0.9"/><line x1="307.05" y1="161.63000000000002" x2="307.05" y2="408" stroke="#e2e2e2" stroke-width="0.9"/><line x1="339.50" y1="137" x2="339.50" y2="151.3" stroke="#e0e0e0" stroke-width="0.9"/><line x1="339.50" y1="161.63000000000002" x2="339.50" y2="408" stroke="#e2e2e2" stroke-width="0.9"/><line x1="371.95" y1="137" x2="371.95" y2="151.3" stroke="#e0e0e0" stroke-width="0.9"/><line x1="371.95" y1="151.3" x2="371.95" y2="408" stroke="#e2e2e2" stroke-width="0.9"/><line x1="404.40" y1="137" x2="404.40" y2="151.3" stroke="#e0e0e0" stroke-width="0.9"/><line x1="404.40" y1="161.63000000000002" x2="404.40" y2="408" stroke="#e2e2e2" stroke-width="0.9"/><line x1="436.85" y1="137" x2="436.85" y2="151.3" stroke="#e0e0e0" stroke-width="0.9"/><line x1="436.85" y1="151.3" x2="436.85" y2="408" stroke="#e2e2e2" stroke-width="0.9"/><line x1="469.30" y1="137" x2="469.30" y2="151.3" stroke="#e0e0e0" stroke-width="0.9"/><line x1="469.30" y1="151.3" x2="469.30" y2="408" stroke="#e2e2e2" stroke-width="0.9"/><line x1="501.75" y1="137" x2="501.75" y2="151.3" stroke="#e0e0e0" stroke-width="0.9"/><line x1="501.75" y1="151.3" x2="501.75" y2="408" stroke="#e2e2e2" stroke-width="0.9"/><line x1="534.20" y1="137" x2="534.20" y2="151.3" stroke="#e0e0e0" stroke-width="0.9"/><line x1="534.20" y1="151.3" x2="534.20" y2="408" stroke="#e2e2e2" stroke-width="0.9"/><line x1="566.65" y1="137" x2="566.65" y2="151.3" stroke="#e0e0e0" stroke-width="0.9"/><line x1="566.65" y1="151.3" x2="566.65" y2="408" stroke="#e2e2e2" stroke-width="0.9"/><line x1="599.10" y1="137" x2="599.10" y2="151.3" stroke="#e0e0e0" stroke-width="0.9"/><line x1="599.10" y1="151.3" x2="599.10" y2="408" stroke="#e2e2e2" stroke-width="0.9"/><line x1="631.55" y1="137" x2="631.55" y2="151.3" stroke="#e0e0e0" stroke-width="0.9"/><line x1="631.55" y1="151.3" x2="631.55" y2="408" stroke="#e2e2e2" stroke-width="0.9"/><line x1="664.00" y1="137" x2="664.00" y2="151.3" stroke="#e0e0e0" stroke-width="0.9"/><line x1="664.00" y1="151.3" x2="664.00" y2="408" stroke="#e2e2e2" stroke-width="0.9"/><line x1="696.45" y1="137" x2="696.45" y2="151.3" stroke="#e0e0e0" stroke-width="0.9"/><line x1="696.45" y1="151.3" x2="696.45" y2="408" stroke="#e2e2e2" stroke-width="0.9"/><line x1="728.90" y1="137" x2="728.90" y2="151.3" stroke="#e0e0e0" stroke-width="0.9"/><line x1="728.90" y1="151.3" x2="728.90" y2="408" stroke="#e2e2e2" stroke-width="0.9"/><line x1="761.35" y1="137" x2="761.35" y2="151.3" stroke="#e0e0e0" stroke-width="0.9"/><line x1="761.35" y1="151.3" x2="761.35" y2="408" stroke="#e2e2e2" stroke-width="0.9"/><line x1="793.80" y1="137" x2="793.80" y2="151.3" stroke="#e0e0e0" stroke-width="0.9"/><line x1="793.80" y1="151.3" x2="793.80" y2="408" stroke="#e2e2e2" stroke-width="0.9"/><polygon points="5.6,149.3 12.9,140.3 12.9,149.3" fill="#dadada"/></svg>
<div class="t" style="left:15.0px;top:141.8px;width:32.45px;text-align:center;font-size:6.3px;color:#2a8050;-webkit-text-stroke:0.12px #2a8050">A</div>
<div class="t" style="left:47.45px;top:141.8px;width:32.45px;text-align:center;font-size:6.3px;color:#6a6a6a;-webkit-text-stroke:0.12px #6a6a6a">B</div>
<div class="t" style="left:79.9px;top:141.8px;width:32.45px;text-align:center;font-size:6.3px;color:#6a6a6a;-webkit-text-stroke:0.12px #6a6a6a">C</div>
<div class="t" style="left:112.35000000000001px;top:141.8px;width:32.45px;text-align:center;font-size:6.3px;color:#6a6a6a;-webkit-text-stroke:0.12px #6a6a6a">D</div>
<div class="t" style="left:144.8px;top:141.8px;width:32.45px;text-align:center;font-size:6.3px;color:#6a6a6a;-webkit-text-stroke:0.12px #6a6a6a">E</div>
<div class="t" style="left:177.25px;top:141.8px;width:32.45px;text-align:center;font-size:6.3px;color:#6a6a6a;-webkit-text-stroke:0.12px #6a6a6a">F</div>
<div class="t" style="left:209.70000000000002px;top:141.8px;width:32.45px;text-align:center;font-size:6.3px;color:#6a6a6a;-webkit-text-stroke:0.12px #6a6a6a">G</div>
<div class="t" style="left:242.15000000000003px;top:141.8px;width:32.45px;text-align:center;font-size:6.3px;color:#6a6a6a;-webkit-text-stroke:0.12px #6a6a6a">H</div>
<div class="t" style="left:274.6px;top:141.8px;width:32.45px;text-align:center;font-size:6.3px;color:#6a6a6a;-webkit-text-stroke:0.12px #6a6a6a">I</div>
<div class="t" style="left:307.05px;top:141.8px;width:32.45px;text-align:center;font-size:6.3px;color:#6a6a6a;-webkit-text-stroke:0.12px #6a6a6a">J</div>
<div class="t" style="left:339.5px;top:141.8px;width:32.45px;text-align:center;font-size:6.3px;color:#6a6a6a;-webkit-text-stroke:0.12px #6a6a6a">K</div>
<div class="t" style="left:371.95000000000005px;top:141.8px;width:32.45px;text-align:center;font-size:6.3px;color:#6a6a6a;-webkit-text-stroke:0.12px #6a6a6a">L</div>
<div class="t" style="left:404.40000000000003px;top:141.8px;width:32.45px;text-align:center;font-size:6.3px;color:#6a6a6a;-webkit-text-stroke:0.12px #6a6a6a">M</div>
<div class="t" style="left:436.85px;top:141.8px;width:32.45px;text-align:center;font-size:6.3px;color:#6a6a6a;-webkit-text-stroke:0.12px #6a6a6a">N</div>
<div class="t" style="left:469.30000000000007px;top:141.8px;width:32.45px;text-align:center;font-size:6.3px;color:#6a6a6a;-webkit-text-stroke:0.12px #6a6a6a">O</div>
<div class="t" style="left:501.75000000000006px;top:141.8px;width:32.45px;text-align:center;font-size:6.3px;color:#6a6a6a;-webkit-text-stroke:0.12px #6a6a6a">P</div>
<div class="t" style="left:534.2px;top:141.8px;width:32.45px;text-align:center;font-size:6.3px;color:#6a6a6a;-webkit-text-stroke:0.12px #6a6a6a">Q</div>
<div class="t" style="left:566.6500000000001px;top:141.8px;width:32.45px;text-align:center;font-size:6.3px;color:#6a6a6a;-webkit-text-stroke:0.12px #6a6a6a">R</div>
<div class="t" style="left:599.1px;top:141.8px;width:32.45px;text-align:center;font-size:6.3px;color:#6a6a6a;-webkit-text-stroke:0.12px #6a6a6a">S</div>
<div class="t" style="left:631.5500000000001px;top:141.8px;width:32.45px;text-align:center;font-size:6.3px;color:#6a6a6a;-webkit-text-stroke:0.12px #6a6a6a">T</div>
<div class="t" style="left:664.0px;top:141.8px;width:32.45px;text-align:center;font-size:6.3px;color:#6a6a6a;-webkit-text-stroke:0.12px #6a6a6a">U</div>
<div class="t" style="left:696.45px;top:141.8px;width:32.45px;text-align:center;font-size:6.3px;color:#6a6a6a;-webkit-text-stroke:0.12px #6a6a6a">V</div>
<div class="t" style="left:728.9000000000001px;top:141.8px;width:32.45px;text-align:center;font-size:6.3px;color:#6a6a6a;-webkit-text-stroke:0.12px #6a6a6a">W</div>
<div class="t" style="left:761.35px;top:141.8px;width:32.45px;text-align:center;font-size:6.3px;color:#6a6a6a;-webkit-text-stroke:0.12px #6a6a6a">X</div>
<div class="t" style="left:-22.1px;top:154.50px;width:60px;text-align:center;font-size:6.7px;transform:scaleX(0.9);color:#2a8050;-webkit-text-stroke:0.1px #2a8050">1</div>
<div class="t" style="left:-22.1px;top:164.83px;width:60px;text-align:center;font-size:6.7px;transform:scaleX(0.9);color:#606060;-webkit-text-stroke:0.1px #606060">2</div>
<div class="t" style="left:-22.1px;top:175.16px;width:60px;text-align:center;font-size:6.7px;transform:scaleX(0.9);color:#606060;-webkit-text-stroke:0.1px #606060">3</div>
<div class="t" style="left:-22.1px;top:185.49px;width:60px;text-align:center;font-size:6.7px;transform:scaleX(0.9);color:#606060;-webkit-text-stroke:0.1px #606060">4</div>
<div class="t" style="left:-22.1px;top:195.82px;width:60px;text-align:center;font-size:6.7px;transform:scaleX(0.9);color:#606060;-webkit-text-stroke:0.1px #606060">5</div>
<div class="t" style="left:-22.1px;top:206.15px;width:60px;text-align:center;font-size:6.7px;transform:scaleX(0.9);color:#606060;-webkit-text-stroke:0.1px #606060">6</div>
<div class="t" style="left:-22.1px;top:216.48px;width:60px;text-align:center;font-size:6.7px;transform:scaleX(0.9);color:#606060;-webkit-text-stroke:0.1px #606060">7</div>
<div class="t" style="left:-22.1px;top:226.81px;width:60px;text-align:center;font-size:6.7px;transform:scaleX(0.9);color:#606060;-webkit-text-stroke:0.1px #606060">8</div>
<div class="t" style="left:-22.1px;top:237.14px;width:60px;text-align:center;font-size:6.7px;transform:scaleX(0.9);color:#606060;-webkit-text-stroke:0.1px #606060">9</div>
<div class="t" style="left:-22.1px;top:247.47px;width:60px;text-align:center;font-size:6.7px;transform:scaleX(0.9);color:#606060;-webkit-text-stroke:0.1px #606060">10</div>
<div class="t" style="left:-22.1px;top:257.80px;width:60px;text-align:center;font-size:6.7px;transform:scaleX(0.9);color:#606060;-webkit-text-stroke:0.1px #606060">11</div>
<div class="t" style="left:-22.1px;top:268.13px;width:60px;text-align:center;font-size:6.7px;transform:scaleX(0.9);color:#606060;-webkit-text-stroke:0.1px #606060">12</div>
<div class="t" style="left:-22.1px;top:278.46px;width:60px;text-align:center;font-size:6.7px;transform:scaleX(0.9);color:#606060;-webkit-text-stroke:0.1px #606060">13</div>
<div class="t" style="left:-22.1px;top:288.79px;width:60px;text-align:center;font-size:6.7px;transform:scaleX(0.9);color:#606060;-webkit-text-stroke:0.1px #606060">14</div>
<div class="t" style="left:-22.1px;top:299.12px;width:60px;text-align:center;font-size:6.7px;transform:scaleX(0.9);color:#606060;-webkit-text-stroke:0.1px #606060">15</div>
<div class="t" style="left:-22.1px;top:309.45px;width:60px;text-align:center;font-size:6.7px;transform:scaleX(0.9);color:#606060;-webkit-text-stroke:0.1px #606060">16</div>
<div class="t" style="left:-22.1px;top:319.78px;width:60px;text-align:center;font-size:6.7px;transform:scaleX(0.9);color:#606060;-webkit-text-stroke:0.1px #606060">17</div>
<div class="t" style="left:-22.1px;top:330.11px;width:60px;text-align:center;font-size:6.7px;transform:scaleX(0.9);color:#606060;-webkit-text-stroke:0.1px #606060">18</div>
<div class="t" style="left:-22.1px;top:340.44px;width:60px;text-align:center;font-size:6.7px;transform:scaleX(0.9);color:#606060;-webkit-text-stroke:0.1px #606060">19</div>
<div class="t" style="left:-22.1px;top:350.77px;width:60px;text-align:center;font-size:6.7px;transform:scaleX(0.9);color:#606060;-webkit-text-stroke:0.1px #606060">20</div>
<div class="t" style="left:-22.1px;top:361.10px;width:60px;text-align:center;font-size:6.7px;transform:scaleX(0.9);color:#606060;-webkit-text-stroke:0.1px #606060">21</div>
<div class="t" style="left:-22.1px;top:371.43px;width:60px;text-align:center;font-size:6.7px;transform:scaleX(0.9);color:#606060;-webkit-text-stroke:0.1px #606060">22</div>
<div class="t" style="left:-22.1px;top:381.76px;width:60px;text-align:center;font-size:6.7px;transform:scaleX(0.9);color:#606060;-webkit-text-stroke:0.1px #606060">23</div>
<div class="t" style="left:-22.1px;top:392.09px;width:60px;text-align:center;font-size:6.7px;transform:scaleX(0.9);color:#606060;-webkit-text-stroke:0.1px #606060">24</div>
<div class="t" style="left:-22.1px;top:402.42px;width:60px;text-align:center;font-size:6.7px;transform:scaleX(0.9);color:#606060;-webkit-text-stroke:0.1px #606060">25</div>
<div class="t" style="left:-22.1px;top:412.75px;width:60px;text-align:center;font-size:6.7px;transform:scaleX(0.9);color:#606060;-webkit-text-stroke:0.1px #606060">26</div>
<div class="c" style="left:16.60px;top:154.00px;width:36.69px;overflow:hidden">StudentId</div>
<div class="c" style="left:49.05px;top:154.00px;width:36.69px;overflow:hidden">Signature</div>
<div class="c" style="left:81.50px;top:154.00px;width:36.69px;overflow:hidden">ClassArm</div>
<div class="c" style="left:113.95px;top:154.00px;width:36.69px;overflow:hidden">FirstName</div>
<div class="c" style="left:146.40px;top:154.00px;width:36.69px;overflow:hidden">LastName</div>
<div class="c" style="left:178.85px;top:154.00px;width:36.69px;overflow:hidden">CA1</div>
<div class="c" style="left:211.30px;top:154.00px;width:36.69px;overflow:hidden">CA2</div>
<div class="c" style="left:243.75px;top:154.00px;width:36.69px;overflow:hidden">CA3</div>
<div class="c" style="left:276.20px;top:154.00px;width:36.69px;overflow:hidden">CA4</div>
<div class="c" style="left:308.65px;top:154.00px;width:36.69px;overflow:hidden">Total</div>
<div class="c" style="left:341.10px;top:154.00px;width:36.69px;overflow:hidden">Exam</div>
<div class="c" style="left:373.55px;top:154.00px;width:240.96px;overflow:hidden">Cummulative</div>
<div class="c" style="left:178.85px;top:163.63px;width:36.69px;overflow:hidden">10 Marks</div>
<div class="c" style="left:211.30px;top:163.63px;width:36.69px;overflow:hidden">10 Marks</div>
<div class="c" style="left:243.75px;top:163.63px;width:36.69px;overflow:hidden">10 Marks</div>
<div class="c" style="left:276.20px;top:163.63px;width:36.69px;overflow:hidden">10 Marks</div>
<div class="c" style="left:308.65px;top:163.63px;width:36.69px;overflow:hidden">40 Marks</div>
<div class="c" style="left:341.10px;top:163.63px;width:36.69px;overflow:hidden">60 Marks</div>
<div class="c" style="left:373.55px;top:163.63px;width:36.69px;overflow:hidden">100 Marks</div>
<div class="c" style="left:16.60px;top:173.96px;width:36.69px;overflow:hidden">S400/2022</div>
<div class="c" style="left:49.05px;top:173.96px;width:36.69px;overflow:hidden">9d4c3717-</div>
<div class="c" style="left:81.50px;top:173.96px;width:36.69px;overflow:hidden">JSS1A</div>
<div class="c" style="left:113.95px;top:173.96px;width:36.69px;overflow:hidden">Yasir Ya&#39;u</div>
<div class="c" style="left:146.40px;top:173.96px;width:36.69px;overflow:hidden">Hussaini</div>
<div class="cr" style="left:307.05px;top:173.96px;width:30.05px">0</div>
<div class="cr" style="left:371.95px;top:173.96px;width:30.05px">0</div>
<div class="c" style="left:16.60px;top:184.29px;width:36.69px;overflow:hidden">S400/2022</div>
<div class="c" style="left:49.05px;top:184.29px;width:36.69px;overflow:hidden">062794d1-</div>
<div class="c" style="left:81.50px;top:184.29px;width:36.69px;overflow:hidden">JSS1A</div>
<div class="c" style="left:113.95px;top:184.29px;width:36.69px;overflow:hidden">USMAN US</div>
<div class="c" style="left:146.40px;top:184.29px;width:36.69px;overflow:hidden">MUSA</div>
<div class="cr" style="left:307.05px;top:184.29px;width:30.05px">0</div>
<div class="cr" style="left:371.95px;top:184.29px;width:30.05px">0</div>
<div class="c" style="left:16.60px;top:194.62px;width:36.69px;overflow:hidden">S400/2022</div>
<div class="c" style="left:49.05px;top:194.62px;width:36.69px;overflow:hidden">1b08bef4-4</div>
<div class="c" style="left:81.50px;top:194.62px;width:36.69px;overflow:hidden">JSS1A</div>
<div class="c" style="left:113.95px;top:194.62px;width:36.69px;overflow:hidden">Harira Uma</div>
<div class="c" style="left:146.40px;top:194.62px;width:36.69px;overflow:hidden">Habib</div>
<div class="cr" style="left:307.05px;top:194.62px;width:30.05px">0</div>
<div class="cr" style="left:371.95px;top:194.62px;width:30.05px">0</div>
<div class="c" style="left:16.60px;top:204.95px;width:36.69px;overflow:hidden">S400/2022</div>
<div class="c" style="left:49.05px;top:204.95px;width:36.69px;overflow:hidden">1d31ddc6-</div>
<div class="c" style="left:81.50px;top:204.95px;width:36.69px;overflow:hidden">JSS1A</div>
<div class="c" style="left:113.95px;top:204.95px;width:36.69px;overflow:hidden">Fatima Ima</div>
<div class="c" style="left:146.40px;top:204.95px;width:36.69px;overflow:hidden">Ibrahim</div>
<div class="cr" style="left:307.05px;top:204.95px;width:30.05px">0</div>
<div class="cr" style="left:371.95px;top:204.95px;width:30.05px">0</div>
<div class="c" style="left:16.60px;top:215.28px;width:36.69px;overflow:hidden">S400/2022</div>
<div class="c" style="left:49.05px;top:215.28px;width:36.69px;overflow:hidden">5fd9f734-1</div>
<div class="c" style="left:81.50px;top:215.28px;width:36.69px;overflow:hidden">JSS1A</div>
<div class="c" style="left:113.95px;top:215.28px;width:36.69px;overflow:hidden">Hajara Na&#39;A</div>
<div class="c" style="left:146.40px;top:215.28px;width:36.69px;overflow:hidden">Muhammad</div>
<div class="cr" style="left:307.05px;top:215.28px;width:30.05px">0</div>
<div class="cr" style="left:371.95px;top:215.28px;width:30.05px">0</div>
<div class="c" style="left:16.60px;top:225.61px;width:36.69px;overflow:hidden">S400/2022</div>
<div class="c" style="left:49.05px;top:225.61px;width:36.69px;overflow:hidden">d14d0e01-</div>
<div class="c" style="left:81.50px;top:225.61px;width:36.69px;overflow:hidden">JSS1A</div>
<div class="c" style="left:113.95px;top:225.61px;width:36.69px;overflow:hidden">Khadija Sal</div>
<div class="c" style="left:146.40px;top:225.61px;width:36.69px;overflow:hidden">Salisu</div>
<div class="cr" style="left:307.05px;top:225.61px;width:30.05px">0</div>
<div class="cr" style="left:371.95px;top:225.61px;width:30.05px">0</div>
<div class="c" style="left:16.60px;top:235.94px;width:36.69px;overflow:hidden">S400/2022</div>
<div class="c" style="left:49.05px;top:235.94px;width:36.69px;overflow:hidden">25683290-</div>
<div class="c" style="left:81.50px;top:235.94px;width:36.69px;overflow:hidden">JSS1A</div>
<div class="c" style="left:113.95px;top:235.94px;width:36.69px;overflow:hidden">Asmau Uma</div>
<div class="c" style="left:146.40px;top:235.94px;width:36.69px;overflow:hidden">Muhammad</div>
<div class="cr" style="left:307.05px;top:235.94px;width:30.05px">0</div>
<div class="cr" style="left:371.95px;top:235.94px;width:30.05px">0</div>
<div class="c" style="left:16.60px;top:246.27px;width:36.69px;overflow:hidden">S400/2022</div>
<div class="c" style="left:49.05px;top:246.27px;width:36.69px;overflow:hidden">f44b1bfb-4</div>
<div class="c" style="left:81.50px;top:246.27px;width:36.69px;overflow:hidden">JSS1A</div>
<div class="c" style="left:113.95px;top:246.27px;width:36.69px;overflow:hidden">Fatima Ibra</div>
<div class="c" style="left:146.40px;top:246.27px;width:36.69px;overflow:hidden">Aliyu</div>
<div class="cr" style="left:307.05px;top:246.27px;width:30.05px">0</div>
<div class="cr" style="left:371.95px;top:246.27px;width:30.05px">0</div>
<div class="c" style="left:16.60px;top:256.60px;width:36.69px;overflow:hidden">S400/2022</div>
<div class="c" style="left:49.05px;top:256.60px;width:36.69px;overflow:hidden">658928b8-</div>
<div class="c" style="left:81.50px;top:256.60px;width:36.69px;overflow:hidden">JSS1A</div>
<div class="c" style="left:113.95px;top:256.60px;width:36.69px;overflow:hidden">Fatima Usm</div>
<div class="c" style="left:146.40px;top:256.60px;width:36.69px;overflow:hidden">Muhammad</div>
<div class="cr" style="left:307.05px;top:256.60px;width:30.05px">0</div>
<div class="cr" style="left:371.95px;top:256.60px;width:30.05px">0</div>
<div class="c" style="left:16.60px;top:266.93px;width:36.69px;overflow:hidden">S400/2022</div>
<div class="c" style="left:49.05px;top:266.93px;width:36.69px;overflow:hidden">e26a0840-</div>
<div class="c" style="left:81.50px;top:266.93px;width:36.69px;overflow:hidden">JSS1A</div>
<div class="c" style="left:113.95px;top:266.93px;width:36.69px;overflow:hidden">Fatima</div>
<div class="c" style="left:146.40px;top:266.93px;width:36.69px;overflow:hidden">Nuruddeen</div>
<div class="cr" style="left:307.05px;top:266.93px;width:30.05px">0</div>
<div class="cr" style="left:371.95px;top:266.93px;width:30.05px">0</div>
<div class="c" style="left:16.60px;top:277.26px;width:36.69px;overflow:hidden">S400/2022</div>
<div class="c" style="left:49.05px;top:277.26px;width:36.69px;overflow:hidden">4bed1775-</div>
<div class="c" style="left:81.50px;top:277.26px;width:36.69px;overflow:hidden">JSS1A</div>
<div class="c" style="left:113.95px;top:277.26px;width:36.69px;overflow:hidden">Rabi&#39;atu M</div>
<div class="c" style="left:146.40px;top:277.26px;width:36.69px;overflow:hidden">Abdu</div>
<div class="cr" style="left:307.05px;top:277.26px;width:30.05px">0</div>
<div class="cr" style="left:371.95px;top:277.26px;width:30.05px">0</div>
<div class="c" style="left:16.60px;top:287.59px;width:36.69px;overflow:hidden">S400/2022</div>
<div class="c" style="left:49.05px;top:287.59px;width:36.69px;overflow:hidden">8c556d27-</div>
<div class="c" style="left:81.50px;top:287.59px;width:36.69px;overflow:hidden">JSS1A</div>
<div class="c" style="left:113.95px;top:287.59px;width:36.69px;overflow:hidden">Zainab Yah</div>
<div class="c" style="left:146.40px;top:287.59px;width:36.69px;overflow:hidden">Buhari</div>
<div class="cr" style="left:307.05px;top:287.59px;width:30.05px">0</div>
<div class="cr" style="left:371.95px;top:287.59px;width:30.05px">0</div>
<div class="c" style="left:16.60px;top:297.92px;width:36.69px;overflow:hidden">S400/2022</div>
<div class="c" style="left:49.05px;top:297.92px;width:36.69px;overflow:hidden">f2c8e38b-1</div>
<div class="c" style="left:81.50px;top:297.92px;width:36.69px;overflow:hidden">JSS1A</div>
<div class="c" style="left:113.95px;top:297.92px;width:36.69px;overflow:hidden">Khadija Hu</div>
<div class="c" style="left:146.40px;top:297.92px;width:36.69px;overflow:hidden">Isah</div>
<div class="cr" style="left:307.05px;top:297.92px;width:30.05px">0</div>
<div class="cr" style="left:371.95px;top:297.92px;width:30.05px">0</div>
<div class="c" style="left:16.60px;top:308.25px;width:36.69px;overflow:hidden">S400/2022</div>
<div class="c" style="left:49.05px;top:308.25px;width:36.69px;overflow:hidden">06905a12-</div>
<div class="c" style="left:81.50px;top:308.25px;width:36.69px;overflow:hidden">JSS1A</div>
<div class="c" style="left:113.95px;top:308.25px;width:36.69px;overflow:hidden">FATIMA SA</div>
<div class="c" style="left:146.40px;top:308.25px;width:36.69px;overflow:hidden">LAWAN</div>
<div class="cr" style="left:307.05px;top:308.25px;width:30.05px">0</div>
<div class="cr" style="left:371.95px;top:308.25px;width:30.05px">0</div>
<div class="c" style="left:16.60px;top:318.58px;width:36.69px;overflow:hidden">S400/2022</div>
<div class="c" style="left:49.05px;top:318.58px;width:36.69px;overflow:hidden">6016d502-</div>
<div class="c" style="left:81.50px;top:318.58px;width:36.69px;overflow:hidden">JSS1A</div>
<div class="c" style="left:113.95px;top:318.58px;width:36.69px;overflow:hidden">Zainab Ibra</div>
<div class="c" style="left:146.40px;top:318.58px;width:36.69px;overflow:hidden">Nasir</div>
<div class="cr" style="left:307.05px;top:318.58px;width:30.05px">0</div>
<div class="cr" style="left:371.95px;top:318.58px;width:30.05px">0</div>
<div class="c" style="left:16.60px;top:328.91px;width:36.69px;overflow:hidden">S400/2022</div>
<div class="c" style="left:49.05px;top:328.91px;width:36.69px;overflow:hidden">2dec9824-</div>
<div class="c" style="left:81.50px;top:328.91px;width:36.69px;overflow:hidden">JSS1A</div>
<div class="c" style="left:113.95px;top:328.91px;width:36.69px;overflow:hidden">Aisha Umar</div>
<div class="c" style="left:146.40px;top:328.91px;width:36.69px;overflow:hidden">Muhammad</div>
<div class="cr" style="left:307.05px;top:328.91px;width:30.05px">0</div>
<div class="cr" style="left:371.95px;top:328.91px;width:30.05px">0</div>
<div class="c" style="left:16.60px;top:339.24px;width:36.69px;overflow:hidden">S400/2022</div>
<div class="c" style="left:49.05px;top:339.24px;width:36.69px;overflow:hidden">d9bde412-</div>
<div class="c" style="left:81.50px;top:339.24px;width:36.69px;overflow:hidden">JSS1A</div>
<div class="c" style="left:113.95px;top:339.24px;width:36.69px;overflow:hidden">Maryam Hu</div>
<div class="c" style="left:146.40px;top:339.24px;width:36.69px;overflow:hidden">Isah</div>
<div class="cr" style="left:307.05px;top:339.24px;width:30.05px">0</div>
<div class="cr" style="left:371.95px;top:339.24px;width:30.05px">0</div>
<div class="c" style="left:16.60px;top:349.57px;width:36.69px;overflow:hidden">S400/2022</div>
<div class="c" style="left:49.05px;top:349.57px;width:36.69px;overflow:hidden">65cb2050-</div>
<div class="c" style="left:81.50px;top:349.57px;width:36.69px;overflow:hidden">JSS1A</div>
<div class="c" style="left:113.95px;top:349.57px;width:36.69px;overflow:hidden">Nafisa Jalla</div>
<div class="c" style="left:146.40px;top:349.57px;width:36.69px;overflow:hidden">Hussani</div>
<div class="cr" style="left:307.05px;top:349.57px;width:30.05px">0</div>
<div class="cr" style="left:371.95px;top:349.57px;width:30.05px">0</div>
<div class="c" style="left:16.60px;top:359.90px;width:36.69px;overflow:hidden">S400/2022</div>
<div class="c" style="left:49.05px;top:359.90px;width:36.69px;overflow:hidden">8637a7e8-</div>
<div class="c" style="left:81.50px;top:359.90px;width:36.69px;overflow:hidden">JSS1A</div>
<div class="c" style="left:113.95px;top:359.90px;width:36.69px;overflow:hidden">Hafsat Adam</div>
<div class="c" style="left:146.40px;top:359.90px;width:36.69px;overflow:hidden">Muhammad</div>
<div class="cr" style="left:307.05px;top:359.90px;width:30.05px">0</div>
<div class="cr" style="left:371.95px;top:359.90px;width:30.05px">0</div>
<div class="c" style="left:16.60px;top:370.23px;width:36.69px;overflow:hidden">S400/2022</div>
<div class="c" style="left:49.05px;top:370.23px;width:36.69px;overflow:hidden">6a7ef528-3</div>
<div class="c" style="left:81.50px;top:370.23px;width:36.69px;overflow:hidden">JSS1A</div>
<div class="c" style="left:113.95px;top:370.23px;width:36.69px;overflow:hidden">Khadija</div>
<div class="c" style="left:146.40px;top:370.23px;width:36.69px;overflow:hidden">Abdullahi</div>
<div class="cr" style="left:307.05px;top:370.23px;width:30.05px">0</div>
<div class="cr" style="left:371.95px;top:370.23px;width:30.05px">0</div>
<div class="c" style="left:16.60px;top:380.56px;width:36.69px;overflow:hidden">S400/2022</div>
<div class="c" style="left:49.05px;top:380.56px;width:36.69px;overflow:hidden">4d65ef0a-e</div>
<div class="c" style="left:81.50px;top:380.56px;width:36.69px;overflow:hidden">JSS1A</div>
<div class="c" style="left:113.95px;top:380.56px;width:36.69px;overflow:hidden">Hauwa&#39;u Ha</div>
<div class="c" style="left:146.40px;top:380.56px;width:36.69px;overflow:hidden">Adam</div>
<div class="cr" style="left:307.05px;top:380.56px;width:30.05px">0</div>
<div class="cr" style="left:371.95px;top:380.56px;width:30.05px">0</div>
<div class="c" style="left:16.60px;top:390.89px;width:36.69px;overflow:hidden">S400/2022</div>
<div class="c" style="left:49.05px;top:390.89px;width:36.69px;overflow:hidden">1571e7c6-</div>
<div class="c" style="left:81.50px;top:390.89px;width:36.69px;overflow:hidden">JSS1A</div>
<div class="c" style="left:113.95px;top:390.89px;width:36.69px;overflow:hidden">Hafsat Shu&#39;</div>
<div class="c" style="left:146.40px;top:390.89px;width:36.69px;overflow:hidden">Abubakar</div>
<div class="cr" style="left:307.05px;top:390.89px;width:30.05px">0</div>
<div class="cr" style="left:371.95px;top:390.89px;width:30.05px">0</div>
<div class="c" style="left:16.60px;top:401.22px;width:36.69px;overflow:hidden">S400/2022</div>
<div class="c" style="left:49.05px;top:401.22px;width:36.69px;overflow:hidden">9e0e7a82-</div>
<div class="c" style="left:81.50px;top:401.22px;width:36.69px;overflow:hidden">JSS1B</div>
<div class="c" style="left:113.95px;top:401.22px;width:36.69px;overflow:hidden">Abubakar L</div>
<div class="c" style="left:146.40px;top:401.22px;width:36.69px;overflow:hidden">Shehu</div>
<div class="cr" style="left:307.05px;top:401.22px;width:30.05px">0</div>
<div class="cr" style="left:371.95px;top:401.22px;width:30.05px">0</div>
<div class="a" style="left:14.2px;top:151px;width:33.6px;height:11.5px;border:1.6px solid #217346"></div>
<div class="a" style="left:45.3px;top:159.5px;width:3.7px;height:3.8px;background:#217346"></div>
</div></body></html>
